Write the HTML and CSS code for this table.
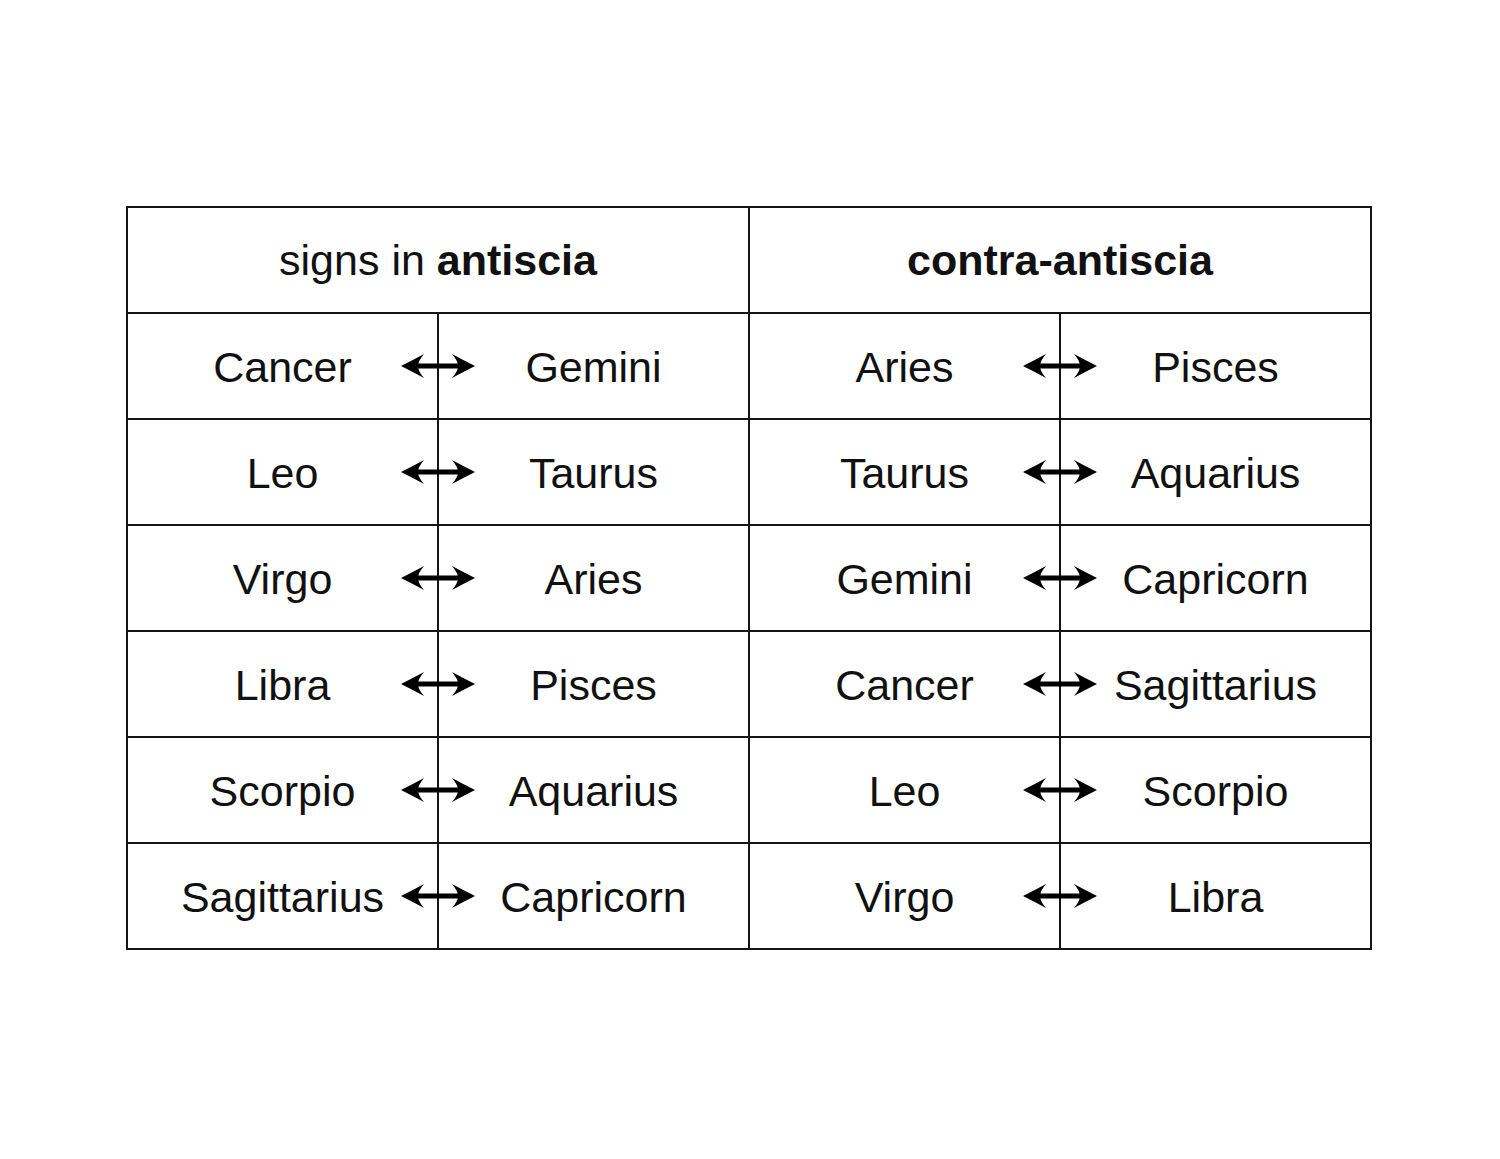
FILE: index.html
```html
<!DOCTYPE html>
<html>
<head>
<meta charset="utf-8">
<link rel="stylesheet" href="styles.css">
</head>
<body>
<svg width="0" height="0" class="defs">
  <defs>
    <symbol id="arr" viewBox="0 0 74 24">
      <rect x="14" y="9.5" width="46" height="5"/>
      <path d="M0 12 Q12 6 23 0 Q17 7 17 12 Q17 17 23 24 Q12 18 0 12 Z"/>
      <path d="M74 12 Q62 6 51 0 Q57 7 57 12 Q57 17 51 24 Q62 18 74 12 Z"/>
    </symbol>
  </defs>
</svg>
<div class="page">
<table class="grid">
  <tr class="head">
    <th colspan="2">signs in <b>antiscia</b></th>
    <th colspan="2"><b>contra-antiscia</b></th>
  </tr>
  <tr><td class="l">Cancer<svg class="arrow"><use href="#arr"/></svg></td><td>Gemini</td><td class="l">Aries<svg class="arrow"><use href="#arr"/></svg></td><td>Pisces</td></tr>
  <tr><td class="l">Leo<svg class="arrow"><use href="#arr"/></svg></td><td>Taurus</td><td class="l">Taurus<svg class="arrow"><use href="#arr"/></svg></td><td>Aquarius</td></tr>
  <tr><td class="l">Virgo<svg class="arrow"><use href="#arr"/></svg></td><td>Aries</td><td class="l">Gemini<svg class="arrow"><use href="#arr"/></svg></td><td>Capricorn</td></tr>
  <tr><td class="l">Libra<svg class="arrow"><use href="#arr"/></svg></td><td>Pisces</td><td class="l">Cancer<svg class="arrow"><use href="#arr"/></svg></td><td>Sagittarius</td></tr>
  <tr><td class="l">Scorpio<svg class="arrow"><use href="#arr"/></svg></td><td>Aquarius</td><td class="l">Leo<svg class="arrow"><use href="#arr"/></svg></td><td>Scorpio</td></tr>
  <tr><td class="l">Sagittarius<svg class="arrow"><use href="#arr"/></svg></td><td>Capricorn</td><td class="l">Virgo<svg class="arrow"><use href="#arr"/></svg></td><td>Libra</td></tr>
</table>
</div>
</body>
</html>
```
FILE: styles.css
```css
html, body {
  margin: 0;
  padding: 0;
  background: #ffffff;
}
.defs {
  position: absolute;
  width: 0;
  height: 0;
}
.page {
  padding: 206px 0 0 126px;
}
.grid {
  border-collapse: collapse;
  font-family: "Liberation Sans", Arial, sans-serif;
  font-size: 43px;
  color: #111111;
}
.grid th, .grid td {
  border: 2px solid #151515;
  width: 311px;
  height: 106px;
  padding: 3px 0 0 0;
  text-align: center;
  vertical-align: middle;
  font-weight: normal;
  box-sizing: border-box;
}
.grid th {
  width: 622px;
  padding-top: 0;
}
.grid b {
  font-weight: bold;
}
.grid td.l {
  position: relative;
}
.arrow {
  position: absolute;
  right: -38px;
  top: 50%;
  width: 74px;
  height: 24px;
  margin-top: -12px;
  fill: #000000;
}
```
